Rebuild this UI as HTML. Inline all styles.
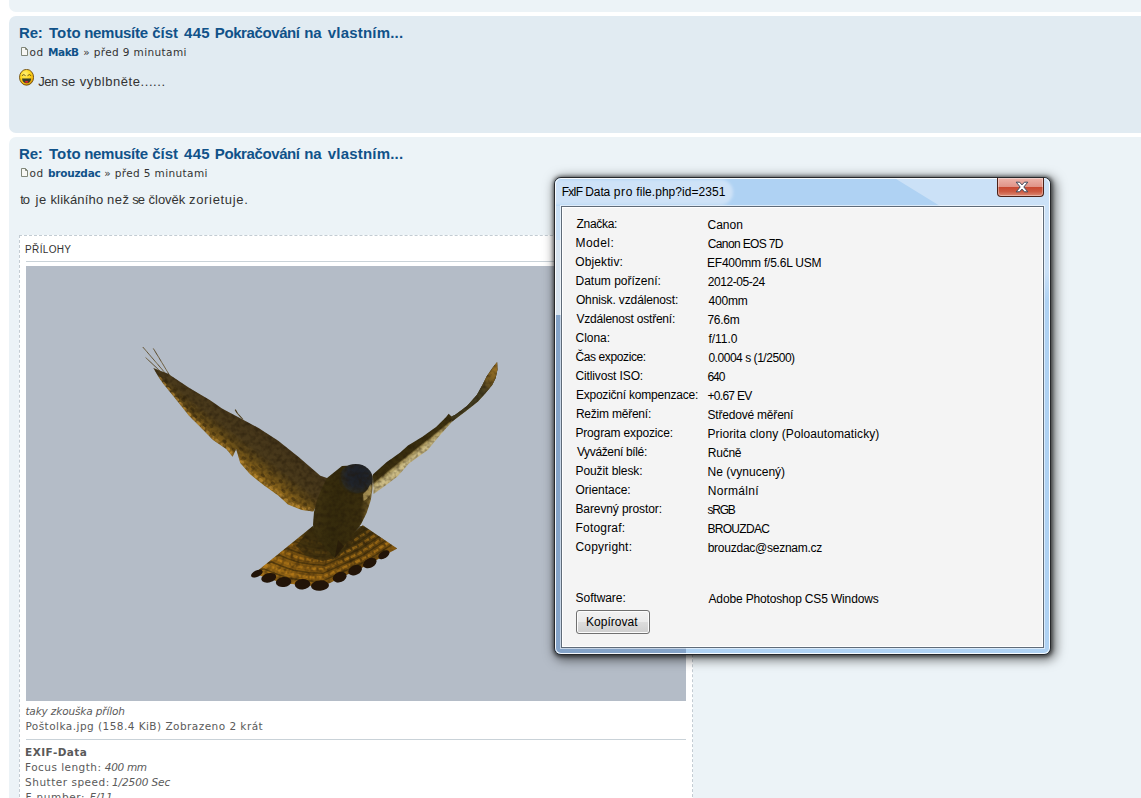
<!DOCTYPE html>
<html lang="cs"><head><meta charset="utf-8"><title>FxIF Data</title>
<style>
html,body{margin:0;padding:0;background:#fff;overflow:hidden}
body{width:1141px;height:798px;position:relative;font-family:"Liberation Sans","DejaVu Sans",sans-serif}
.a{position:absolute}
.post{position:absolute;left:9px;width:1160px;border-radius:7px}
.t{position:absolute;white-space:nowrap}
.t b{font-weight:bold}
.w{position:absolute;top:0;white-space:nowrap}
</style></head><body>
<!-- posts -->
<div class="post" style="top:-20px;height:32px;background:#ECF3F7"></div>
<div class="post" style="top:16px;height:117px;background:#E1EBF2"></div>
<div class="post" style="top:137px;height:700px;background:#ECF3F7"></div>
<!-- post icons -->
<svg class="a" style="left:21px;top:47px" width="7" height="9" viewBox="0 0 7 9"><path d="M.5.5H4.5L6.5 2.5V8.5H.5Z" fill="#f7f7f4" stroke="#81877a"/><path d="M4.5.5V2.5H6.5" fill="none" stroke="#81877a"/></svg>
<svg class="a" style="left:21px;top:168px" width="7" height="9" viewBox="0 0 7 9"><path d="M.5.5H4.5L6.5 2.5V8.5H.5Z" fill="#f7f7f4" stroke="#81877a"/><path d="M4.5.5V2.5H6.5" fill="none" stroke="#81877a"/></svg>
<!-- smiley -->
<svg class="a" style="left:19px;top:69px" width="15" height="17" viewBox="0 0 15 17">
<defs><radialGradient id="sg" cx="40%" cy="30%" r="70%"><stop offset="0" stop-color="#fff27a"/><stop offset=".5" stop-color="#ffd91e"/><stop offset=".85" stop-color="#f2b40e"/><stop offset="1" stop-color="#c98a08"/></radialGradient></defs>
<ellipse cx="7.55" cy="8.3" rx="7.05" ry="7.9" fill="url(#sg)" stroke="#6e4c0c" stroke-width=".9"/>
<path d="M3 9.5H12.2C12 12.6 10 14.2 7.6 14.2C5.2 14.2 3.2 12.6 3 9.5Z" fill="#38402f"/>
<ellipse cx="7.6" cy="12.9" rx="1.7" ry=".8" fill="#f0202c"/>
<path d="M2.9 6.7Q4.75 4.5 6.6 6.7M8.5 6.7Q10.35 4.5 12.2 6.7" fill="none" stroke="#4a3a0a" stroke-width=".8"/>
</svg>
<!-- attach box -->
<div class="a" style="left:19px;top:235px;width:672px;height:600px;background:#fff;border:1px dashed #C3CCD3"></div>
<div class="a" style="left:26px;top:261px;width:660px;height:1px;background:#C9D2D8"></div>
<div class="a" style="left:26px;top:739px;width:660px;height:1px;background:#C9D2D8"></div>
<!--IMAGE-->
<svg class="a" style="left:26px;top:266px" width="660" height="435" viewBox="26 266 660 435">
<defs>
<linearGradient id="sky" x1="0" y1="0" x2="0" y2="1"><stop offset="0" stop-color="#B4BCC9"/><stop offset="1" stop-color="#B2BAC5"/></linearGradient>
<linearGradient id="lw" gradientUnits="userSpaceOnUse" x1="268" y1="428" x2="232" y2="474"><stop offset="0" stop-color="#43341a"/><stop offset=".42" stop-color="#4a3a1b"/><stop offset=".56" stop-color="#624a18"/><stop offset=".72" stop-color="#8a641a"/><stop offset=".88" stop-color="#aa7c1e"/><stop offset="1" stop-color="#c4943c"/></linearGradient>
<linearGradient id="rw" gradientUnits="userSpaceOnUse" x1="402" y1="449" x2="414" y2="464"><stop offset="0" stop-color="#33290c"/><stop offset=".42" stop-color="#3e3210"/><stop offset=".52" stop-color="#a8955a"/><stop offset=".7" stop-color="#cfc08a"/><stop offset="1" stop-color="#c2b07a"/></linearGradient>
<linearGradient id="rwt" gradientUnits="userSpaceOnUse" x1="452" y1="418" x2="497" y2="362"><stop offset="0" stop-color="#3e381e"/><stop offset=".55" stop-color="#433c20"/><stop offset=".8" stop-color="#826222"/><stop offset="1" stop-color="#a37728"/></linearGradient>
<radialGradient id="tl" gradientUnits="userSpaceOnUse" cx="336" cy="507" r="95"><stop offset="0" stop-color="#33270a"/><stop offset=".42" stop-color="#45340e"/><stop offset=".6" stop-color="#6e4b10"/><stop offset=".8" stop-color="#8c5e12"/><stop offset="1" stop-color="#a06e18"/></radialGradient>
<linearGradient id="bd" gradientUnits="userSpaceOnUse" x1="316" y1="500" x2="372" y2="506"><stop offset="0" stop-color="#3e3210"/><stop offset=".35" stop-color="#342a0c"/><stop offset=".8" stop-color="#3a2e0e"/><stop offset=".93" stop-color="#6a5626"/><stop offset="1" stop-color="#9a8650"/></linearGradient>
<radialGradient id="hd" gradientUnits="userSpaceOnUse" cx="358" cy="476" r="18"><stop offset="0" stop-color="#1c2028"/><stop offset=".6" stop-color="#20242b"/><stop offset=".9" stop-color="#2b2a22"/><stop offset="1" stop-color="#30280f"/></radialGradient>
<filter id="mot" x="-2%" y="-2%" width="104%" height="104%" color-interpolation-filters="sRGB"><feTurbulence type="fractalNoise" baseFrequency=".22" numOctaves="2" seed="7" result="n"/><feColorMatrix in="n" type="matrix" values="0 0 0 0 .13  0 0 0 0 .09  0 0 0 0 .03  1.1 0 0 0 -.42" result="d"/><feComposite in="d" in2="SourceAlpha" operator="in" result="dc"/><feColorMatrix in="n" type="matrix" values="0 0 0 0 .95  0 0 0 0 .75  0 0 0 0 .4  0 .3 0 0 -.25" result="l"/><feComposite in="l" in2="SourceAlpha" operator="in" result="lc"/><feMerge><feMergeNode in="SourceGraphic"/><feMergeNode in="dc"/><feMergeNode in="lc"/></feMerge></filter>
<clipPath id="clw"><path d="M153.3 368.0L168.0 373.7L189.0 387.7L210.1 400.3L222.0 408.4L241.7 419.0L258.5 428.0L278.2 440.7L299.2 457.5L320.3 475.7L327.0 478.0L330.0 485.0L318.0 503.0L313.3 511.5L302.0 510.1L288.0 504.5L278.2 495.4L264.2 485.6L250.1 474.3L240.3 463.1L236.1 449.0L232.6 456.8L226.3 449.0L213.0 440.0L200.3 427.0L189.0 415.7L180.7 405.2L172.3 394.7L163.1 383.5L158.0 376.0L153.3 368.0Z"/></clipPath>
<clipPath id="ctl"><path d="M312.3 526.6L250.6 576.4L256.9 574.6L268.8 578.8L283.6 583.0L302.5 585.2L320.0 586.6L330.0 583.0L339.7 578.1L355.1 571.1L369.8 564.1L383.9 555.7L397.2 548.4L362.8 525.2L338.0 545.0Z"/></clipPath>
</defs>
<rect x="26" y="266" width="660" height="435" fill="#B4BCC7"/>
<g filter="url(#mot)">
<path d="M142.8 347L166 374M153.3 348.4L170 376M145.6 357.5L160 371" stroke="#6e5d38" stroke-width="1" fill="none" opacity=".85"/>
<path d="M235.2 409.6L237.5 413.5L243 419.5" stroke="#5a4a26" stroke-width="1.1" fill="none"/>
<path d="M153.3 368.0L168.0 373.7L189.0 387.7L210.1 400.3L222.0 408.4L241.7 419.0L258.5 428.0L278.2 440.7L299.2 457.5L320.3 475.7L327.0 478.0L330.0 485.0L318.0 503.0L313.3 511.5L302.0 510.1L288.0 504.5L278.2 495.4L264.2 485.6L250.1 474.3L240.3 463.1L236.1 449.0L232.6 456.8L226.3 449.0L213.0 440.0L200.3 427.0L189.0 415.7L180.7 405.2L172.3 394.7L163.1 383.5L158.0 376.0L153.3 368.0Z" fill="url(#lw)"/>
<g clip-path="url(#clw)"><ellipse cx="160.9" cy="378.1" rx="2.4" ry="1.5" transform="rotate(40 160.9 378.1)" fill="#33260c" opacity="0.50"/><ellipse cx="160.4" cy="378.8" rx="2.6" ry="1.6" transform="rotate(40 160.4 378.8)" fill="#c8963c" opacity=".6"/><ellipse cx="166.7" cy="380.3" rx="2.2" ry="1.5" transform="rotate(40 166.7 380.3)" fill="#33260c" opacity="0.35"/><ellipse cx="165.8" cy="381.7" rx="2.4" ry="1.5" transform="rotate(40 165.8 381.7)" fill="#33260c" opacity="0.45"/><ellipse cx="164.2" cy="384.0" rx="2.6" ry="1.6" transform="rotate(40 164.2 384.0)" fill="#c8963c" opacity=".6"/><ellipse cx="169.2" cy="387.8" rx="2.4" ry="1.5" transform="rotate(40 169.2 387.8)" fill="#33260c" opacity="0.50"/><ellipse cx="168.4" cy="389.0" rx="2.6" ry="1.6" transform="rotate(40 168.4 389.0)" fill="#c8963c" opacity=".6"/><ellipse cx="175.8" cy="388.9" rx="2.2" ry="1.5" transform="rotate(40 175.8 388.9)" fill="#33260c" opacity="0.35"/><ellipse cx="174.6" cy="390.8" rx="2.4" ry="1.5" transform="rotate(40 174.6 390.8)" fill="#33260c" opacity="0.45"/><ellipse cx="172.6" cy="394.0" rx="2.6" ry="1.6" transform="rotate(40 172.6 394.0)" fill="#c8963c" opacity=".6"/><ellipse cx="177.7" cy="397.4" rx="2.4" ry="1.5" transform="rotate(40 177.7 397.4)" fill="#33260c" opacity="0.50"/><ellipse cx="176.8" cy="399.0" rx="2.6" ry="1.6" transform="rotate(40 176.8 399.0)" fill="#c8963c" opacity=".6"/><ellipse cx="184.9" cy="397.5" rx="2.2" ry="1.5" transform="rotate(40 184.9 397.5)" fill="#33260c" opacity="0.35"/><ellipse cx="183.4" cy="399.9" rx="2.4" ry="1.5" transform="rotate(40 183.4 399.9)" fill="#33260c" opacity="0.45"/><ellipse cx="180.9" cy="404.0" rx="2.6" ry="1.6" transform="rotate(40 180.9 404.0)" fill="#c8963c" opacity=".6"/><ellipse cx="186.2" cy="407.0" rx="2.4" ry="1.5" transform="rotate(40 186.2 407.0)" fill="#33260c" opacity="0.50"/><ellipse cx="185.0" cy="409.1" rx="2.6" ry="1.6" transform="rotate(40 185.0 409.1)" fill="#c8963c" opacity=".6"/><ellipse cx="194.0" cy="405.9" rx="2.2" ry="1.5" transform="rotate(40 194.0 405.9)" fill="#33260c" opacity="0.35"/><ellipse cx="192.2" cy="409.0" rx="2.4" ry="1.5" transform="rotate(40 192.2 409.0)" fill="#33260c" opacity="0.45"/><ellipse cx="189.1" cy="414.1" rx="2.6" ry="1.6" transform="rotate(40 189.1 414.1)" fill="#c8963c" opacity=".6"/><ellipse cx="195.2" cy="416.3" rx="2.4" ry="1.5" transform="rotate(40 195.2 416.3)" fill="#33260c" opacity="0.50"/><ellipse cx="193.7" cy="418.7" rx="2.6" ry="1.6" transform="rotate(40 193.7 418.7)" fill="#c8963c" opacity=".6"/><ellipse cx="203.8" cy="413.9" rx="2.2" ry="1.5" transform="rotate(40 203.8 413.9)" fill="#33260c" opacity="0.35"/><ellipse cx="201.8" cy="417.4" rx="2.4" ry="1.5" transform="rotate(40 201.8 417.4)" fill="#33260c" opacity="0.45"/><ellipse cx="198.4" cy="423.3" rx="2.6" ry="1.6" transform="rotate(40 198.4 423.3)" fill="#c8963c" opacity=".6"/><ellipse cx="204.5" cy="425.1" rx="2.4" ry="1.5" transform="rotate(40 204.5 425.1)" fill="#33260c" opacity="0.50"/><ellipse cx="203.0" cy="427.8" rx="2.6" ry="1.6" transform="rotate(40 203.0 427.8)" fill="#c8963c" opacity=".6"/><ellipse cx="213.3" cy="422.1" rx="2.2" ry="1.5" transform="rotate(40 213.3 422.1)" fill="#33260c" opacity="0.35"/><ellipse cx="211.2" cy="426.0" rx="2.4" ry="1.5" transform="rotate(40 211.2 426.0)" fill="#33260c" opacity="0.45"/><ellipse cx="207.6" cy="432.5" rx="2.6" ry="1.6" transform="rotate(40 207.6 432.5)" fill="#c8963c" opacity=".6"/><ellipse cx="213.9" cy="434.0" rx="2.4" ry="1.5" transform="rotate(40 213.9 434.0)" fill="#33260c" opacity="0.50"/><ellipse cx="212.2" cy="437.1" rx="2.6" ry="1.6" transform="rotate(40 212.2 437.1)" fill="#c8963c" opacity=".6"/><ellipse cx="223.5" cy="429.5" rx="2.2" ry="1.5" transform="rotate(40 223.5 429.5)" fill="#33260c" opacity="0.35"/><ellipse cx="221.2" cy="433.8" rx="2.4" ry="1.5" transform="rotate(40 221.2 433.8)" fill="#33260c" opacity="0.45"/><ellipse cx="217.4" cy="441.0" rx="2.6" ry="1.6" transform="rotate(40 217.4 441.0)" fill="#c8963c" opacity=".6"/><ellipse cx="224.5" cy="441.4" rx="2.4" ry="1.5" transform="rotate(40 224.5 441.4)" fill="#33260c" opacity="0.50"/><ellipse cx="222.8" cy="444.6" rx="2.6" ry="1.6" transform="rotate(40 222.8 444.6)" fill="#c8963c" opacity=".6"/><ellipse cx="234.1" cy="436.3" rx="2.2" ry="1.5" transform="rotate(40 234.1 436.3)" fill="#33260c" opacity="0.35"/><ellipse cx="231.8" cy="440.9" rx="2.4" ry="1.5" transform="rotate(40 231.8 440.9)" fill="#33260c" opacity="0.45"/><ellipse cx="227.9" cy="448.6" rx="2.6" ry="1.6" transform="rotate(40 227.9 448.6)" fill="#c8963c" opacity=".6"/><ellipse cx="234.0" cy="449.9" rx="2.4" ry="1.5" transform="rotate(40 234.0 449.9)" fill="#33260c" opacity="0.50"/><ellipse cx="232.1" cy="453.5" rx="2.6" ry="1.6" transform="rotate(40 232.1 453.5)" fill="#c8963c" opacity=".6"/><ellipse cx="243.8" cy="444.1" rx="2.2" ry="1.5" transform="rotate(40 243.8 444.1)" fill="#33260c" opacity="0.35"/><ellipse cx="241.2" cy="449.3" rx="2.4" ry="1.5" transform="rotate(40 241.2 449.3)" fill="#33260c" opacity="0.45"/><ellipse cx="236.9" cy="457.9" rx="2.6" ry="1.6" transform="rotate(40 236.9 457.9)" fill="#c8963c" opacity=".6"/><ellipse cx="243.8" cy="458.2" rx="2.4" ry="1.5" transform="rotate(40 243.8 458.2)" fill="#33260c" opacity="0.50"/><ellipse cx="241.9" cy="462.1" rx="2.6" ry="1.6" transform="rotate(40 241.9 462.1)" fill="#c8963c" opacity=".6"/><ellipse cx="253.6" cy="452.0" rx="2.2" ry="1.5" transform="rotate(40 253.6 452.0)" fill="#33260c" opacity="0.35"/><ellipse cx="250.8" cy="457.6" rx="2.4" ry="1.5" transform="rotate(40 250.8 457.6)" fill="#33260c" opacity="0.45"/><ellipse cx="246.2" cy="467.0" rx="2.6" ry="1.6" transform="rotate(40 246.2 467.0)" fill="#c8963c" opacity=".6"/><ellipse cx="252.7" cy="467.5" rx="2.4" ry="1.5" transform="rotate(40 252.7 467.5)" fill="#33260c" opacity="0.50"/><ellipse cx="250.6" cy="471.8" rx="2.6" ry="1.6" transform="rotate(40 250.6 471.8)" fill="#c8963c" opacity=".6"/><ellipse cx="263.3" cy="460.0" rx="2.2" ry="1.5" transform="rotate(40 263.3 460.0)" fill="#33260c" opacity="0.35"/><ellipse cx="260.4" cy="465.9" rx="2.4" ry="1.5" transform="rotate(40 260.4 465.9)" fill="#33260c" opacity="0.45"/><ellipse cx="255.6" cy="475.9" rx="2.6" ry="1.6" transform="rotate(40 255.6 475.9)" fill="#c8963c" opacity=".6"/><ellipse cx="262.8" cy="475.5" rx="2.4" ry="1.5" transform="rotate(40 262.8 475.5)" fill="#33260c" opacity="0.50"/><ellipse cx="260.7" cy="480.0" rx="2.6" ry="1.6" transform="rotate(40 260.7 480.0)" fill="#c8963c" opacity=".6"/><ellipse cx="273.4" cy="467.7" rx="2.2" ry="1.5" transform="rotate(40 273.4 467.7)" fill="#33260c" opacity="0.35"/><ellipse cx="270.6" cy="473.8" rx="2.4" ry="1.5" transform="rotate(40 270.6 473.8)" fill="#33260c" opacity="0.45"/><ellipse cx="265.8" cy="484.0" rx="2.6" ry="1.6" transform="rotate(40 265.8 484.0)" fill="#c8963c" opacity=".6"/><ellipse cx="273.2" cy="483.3" rx="2.4" ry="1.5" transform="rotate(40 273.2 483.3)" fill="#33260c" opacity="0.50"/><ellipse cx="271.2" cy="487.8" rx="2.6" ry="1.6" transform="rotate(40 271.2 487.8)" fill="#c8963c" opacity=".6"/><ellipse cx="283.6" cy="475.2" rx="2.2" ry="1.5" transform="rotate(40 283.6 475.2)" fill="#33260c" opacity="0.35"/><ellipse cx="280.9" cy="481.3" rx="2.4" ry="1.5" transform="rotate(40 280.9 481.3)" fill="#33260c" opacity="0.45"/><ellipse cx="276.5" cy="491.5" rx="2.6" ry="1.6" transform="rotate(40 276.5 491.5)" fill="#c8963c" opacity=".6"/><ellipse cx="283.5" cy="491.1" rx="2.4" ry="1.5" transform="rotate(40 283.5 491.1)" fill="#33260c" opacity="0.50"/><ellipse cx="281.6" cy="495.6" rx="2.6" ry="1.6" transform="rotate(40 281.6 495.6)" fill="#c8963c" opacity=".6"/><ellipse cx="293.2" cy="483.4" rx="2.2" ry="1.5" transform="rotate(40 293.2 483.4)" fill="#33260c" opacity="0.35"/><ellipse cx="290.6" cy="489.7" rx="2.4" ry="1.5" transform="rotate(40 290.6 489.7)" fill="#33260c" opacity="0.45"/><ellipse cx="286.3" cy="500.1" rx="2.6" ry="1.6" transform="rotate(40 286.3 500.1)" fill="#c8963c" opacity=".6"/><ellipse cx="293.5" cy="499.1" rx="2.4" ry="1.5" transform="rotate(40 293.5 499.1)" fill="#33260c" opacity="0.50"/><ellipse cx="291.7" cy="503.6" rx="2.6" ry="1.6" transform="rotate(40 291.7 503.6)" fill="#c8963c" opacity=".6"/><ellipse cx="303.7" cy="490.2" rx="2.2" ry="1.5" transform="rotate(40 303.7 490.2)" fill="#33260c" opacity="0.35"/><ellipse cx="301.4" cy="496.2" rx="2.4" ry="1.5" transform="rotate(40 301.4 496.2)" fill="#33260c" opacity="0.45"/><ellipse cx="297.7" cy="506.1" rx="2.6" ry="1.6" transform="rotate(40 297.7 506.1)" fill="#c8963c" opacity=".6"/><ellipse cx="305.2" cy="504.2" rx="2.4" ry="1.5" transform="rotate(40 305.2 504.2)" fill="#33260c" opacity="0.50"/><ellipse cx="303.8" cy="508.3" rx="2.6" ry="1.6" transform="rotate(40 303.8 508.3)" fill="#c8963c" opacity=".6"/><ellipse cx="314.8" cy="495.3" rx="2.2" ry="1.5" transform="rotate(40 314.8 495.3)" fill="#33260c" opacity="0.35"/><ellipse cx="313.1" cy="500.5" rx="2.4" ry="1.5" transform="rotate(40 313.1 500.5)" fill="#33260c" opacity="0.45"/><ellipse cx="310.2" cy="509.3" rx="2.6" ry="1.6" transform="rotate(40 310.2 509.3)" fill="#c8963c" opacity=".6"/></g>
<path d="M497.1 361.9L492.2 368.2L486.6 376.6L482.4 385.1L476.8 394.9L467.0 406.1L455.7 414.5L451.5 416.6L448.7 413.8L445.9 417.3L436.1 427.1L422.1 437.0L408.0 445.4L400.3 452.6L386.2 462.4L372.9 474.4L373.6 494.0L386.2 484.9L397.4 476.5L408.7 463.8L420.0 455.4L427.7 450.0L436.1 439.8L445.9 428.5L452.2 421.5L455.7 418.7L467.0 410.3L478.2 401.2L485.2 393.5L492.2 385.1L495.7 378.0L497.5 369.6L497.1 361.9Z" fill="url(#rw)"/>
<path d="M497.1 361.9L492.2 368.2L486.6 376.6L482.4 385.1L476.8 394.9L467.0 406.1L455.7 414.5L451.5 416.6L452.2 421.5L455.7 418.7L467.0 410.3L478.2 401.2L485.2 393.5L492.2 385.1L495.7 378.0L497.5 369.6L497.1 361.9Z" fill="url(#rwt)"/>
<path d="M312.3 526.6L250.6 576.4L256.9 574.6L268.8 578.8L283.6 583.0L302.5 585.2L320.0 586.6L330.0 583.0L339.7 578.1L355.1 571.1L369.8 564.1L383.9 555.7L397.2 548.4L362.8 525.2L338.0 545.0Z" fill="url(#tl)"/>
<g clip-path="url(#ctl)" fill="none"><path d="M297.6 538.2L300.4 537.6L305.8 539.9L312.4 542.1L320.9 543.5L328.8 543.9L337.7 539.9L344.6 536.7L351.2 533.5L357.6 529.5L363.5 525.6" stroke="#cc8a1c" stroke-width="2.6" stroke-dasharray="5 2" opacity="0.25"/><path d="M288.2 545.9L291.7 545.1L298.4 547.9L306.7 550.7L317.2 552.4L327.0 552.9L338.1 547.9L346.7 544.0L354.9 540.0L362.8 535.0L370.3 530.2" stroke="#cc8a1c" stroke-width="2.6" stroke-dasharray="5 2" opacity="0.40"/><path d="M279.6 552.8L283.8 551.9L291.6 555.2L301.4 558.5L313.9 560.5L325.4 561.1L338.4 555.2L348.6 550.6L358.3 545.9L367.6 540.0L376.4 534.3" stroke="#cc8a1c" stroke-width="2.6" stroke-dasharray="5 2" opacity="0.50"/><path d="M271.1 559.7L275.9 558.7L284.9 562.5L296.2 566.3L310.5 568.6L323.8 569.3L338.8 562.5L350.5 557.2L361.7 551.8L372.4 545.0L382.5 538.5" stroke="#cc8a1c" stroke-width="2.6" stroke-dasharray="5 2" opacity="0.55"/><path d="M262.6 566.7L268.0 565.5L278.2 569.8L290.9 574.1L307.2 576.7L322.2 577.5L339.2 569.8L352.4 563.8L365.1 557.7L377.2 550.0L388.6 542.6" stroke="#cc8a1c" stroke-width="2.6" stroke-dasharray="5 2" opacity="0.55"/><path d="M292.4 542.4L295.7 541.7L301.7 544.2L309.3 546.8L318.9 548.3L327.8 548.8L337.9 544.2L345.7 540.7L353.2 537.1L360.4 532.5L367.2 528.1" stroke="#30240a" stroke-width="1.4" opacity=".55"/><path d="M283.9 549.3L287.7 548.5L295.0 551.5L304.0 554.6L315.6 556.4L326.2 557.0L338.3 551.5L347.7 547.3L356.6 543.0L365.2 537.5L373.3 532.3" stroke="#30240a" stroke-width="1.4" opacity=".55"/><path d="M275.4 556.3L279.8 555.3L288.3 558.8L298.8 562.4L312.2 564.5L324.6 565.2L338.6 558.8L349.6 553.9L360.0 548.9L370.0 542.5L379.5 536.4" stroke="#30240a" stroke-width="1.4" opacity=".55"/><path d="M266.8 563.2L271.9 562.1L281.6 566.1L293.6 570.2L308.9 572.6L323.0 573.4L339.0 566.1L351.5 560.5L363.4 554.8L374.8 547.5L385.6 540.5" stroke="#30240a" stroke-width="1.4" opacity=".55"/><path d="M258.3 570.2L264.0 568.9L274.8 573.4L288.3 578.0L305.5 580.7L321.4 581.6L339.4 573.4L353.4 567.1L366.8 560.7L379.6 552.5L391.7 544.7" stroke="#30240a" stroke-width="1.4" opacity=".55"/></g>
<g fill="#231408"><ellipse cx="256.9" cy="573.6" rx="6.2" ry="3.2" transform="rotate(-25 256.9 573.6)"/><ellipse cx="268.8" cy="577.8" rx="7.6" ry="4.6" transform="rotate(-14 268.8 577.8)"/><ellipse cx="283.6" cy="582.0" rx="7.8" ry="5.0" transform="rotate(-8 283.6 582.0)"/><ellipse cx="302.5" cy="584.2" rx="7.8" ry="5.2" transform="rotate(-3 302.5 584.2)"/><ellipse cx="320.0" cy="585.6" rx="9.0" ry="5.2" transform="rotate(-4 320.0 585.6)"/><ellipse cx="339.7" cy="577.1" rx="7.2" ry="5.0" transform="rotate(-22 339.7 577.1)"/><ellipse cx="355.1" cy="570.1" rx="7.2" ry="4.8" transform="rotate(-24 355.1 570.1)"/><ellipse cx="369.8" cy="563.1" rx="7.2" ry="4.6" transform="rotate(-27 369.8 563.1)"/><ellipse cx="383.9" cy="554.7" rx="6.2" ry="3.6" transform="rotate(-32 383.9 554.7)"/></g>
<path d="M312.5 526L296 546L306 556L322 561L336 558.5L349 547L363 526Z" fill="#382c0e" opacity=".7"/>
<path d="M327.0 478.0L322.0 488.0L317.0 500.0L314.0 512.0L313.0 525.0L316.0 536.0L324.0 547.0L334.8 558.0L340.0 551.0L350.0 538.0L361.0 524.2L366.6 512.9L370.8 500.3L372.6 488.0L372.9 476.0L362.0 465.0L342.0 466.0Z" fill="url(#bd)"/>
<path d="M338 540L334.8 558L344 546Z" fill="#2a1e0a"/>
<ellipse cx="355.8" cy="479" rx="17" ry="15" fill="url(#hd)"/>
<path d="M363 494Q368 490 370.5 484L371.5 492Q368 499 363.5 501Z" fill="#b8a060" opacity=".75"/>
</g>
</svg>
<!--/IMAGE-->
<!-- dialog -->
<div class="a" id="win" style="left:554px;top:177px;width:495px;height:476px;border:1px solid #26282b;border-radius:7px;background:#AFD2F3;box-shadow:.4px .4px 3.7px 1.1px rgba(0,0,0,.48),2.7px 2.7px 11px 2.2px rgba(0,0,0,.52);overflow:hidden">
  <svg class="a" style="left:0;top:0" width="495" height="476" viewBox="555 178 495 476">
    <defs>
      <filter id="gb" x="-5%" y="-20%" width="110%" height="140%"><feGaussianBlur stdDeviation="1.6"/></filter>
      <linearGradient id="rf" x1="0" y1="0" x2="0" y2="1"><stop offset="0" stop-color="#CBE1F7"/><stop offset=".7" stop-color="#CBE1F7"/><stop offset="1" stop-color="#AFD2F3"/></linearGradient>
    </defs>
    <!-- left glass: light over page, darker where the photo is behind -->
    <rect x="555" y="206" width="7" height="34" fill="#C8DFF5"/>
    <rect x="555" y="240" width="7" height="75" fill="#D7E3EE"/>
    <rect x="555" y="315" width="7" height="340" fill="#84A3C8"/>
    <rect x="555" y="647" width="131" height="8" fill="#84A3C8"/>
    <!-- right glass lighter near title -->
    <rect x="1043" y="206" width="8" height="95" fill="url(#rf)"/>
    <!-- title glow -->
    <rect x="530" y="179.5" width="203" height="25.5" rx="12.5" fill="#CEE2F7" filter="url(#gb)"/>
    <!-- aero reflection -->
    <path d="M894.5 178L1051 178L1051 206L940 206Z" fill="#CBE1F7"/>
  </svg>
  <div class="a" style="left:0;top:0;right:0;bottom:0;border-radius:6px;box-shadow:inset 0 0 0 1px rgba(255,255,255,.9)"></div>
</div>
<div class="a" id="content" style="left:561px;top:206px;width:481px;height:440px;border:1px solid #5f6b78;background:#F4F4F4;box-shadow:0 0 0 1px rgba(255,255,255,.55),inset 0 0 0 1px #fff"></div>
<!-- close button -->
<div class="a" id="close" style="left:997px;top:178px;width:45px;height:18px;border:1px solid #4b2118;border-top:0;border-radius:0 0 4px 4px;background:linear-gradient(#EDB5AB 0,#E09488 48%,#C8472F 50%,#CC5A42 75%,#DC8A74 100%);box-shadow:inset 0 0 0 1px rgba(255,255,255,.35)"></div>
<svg class="a" style="left:1013px;top:180px" width="18" height="14" viewBox="0 0 18 14"><path d="M3.2 2.2H6.6L9 4.9L11.4 2.2H14.8L10.8 7L14.8 11.8H11.4L9 9.1L6.6 11.8H3.2L7.2 7Z" fill="#fff" stroke="#3d4a5c" stroke-width="1" stroke-linejoin="round"/></svg>
<!-- button -->
<div class="a" id="button" style="left:576px;top:610px;width:72px;height:22px;border:1px solid #707070;border-radius:3px;background:linear-gradient(#F2F2F2 0,#EBEBEB 48%,#DDDDDD 50%,#CFCFCF 100%);box-shadow:inset 0 0 0 1px #fcfcfc"></div>
<!-- text -->
<div class="t" id="t1" style='left:0;top:23.0px;width:1141px;height:20px;font:bold 15px "Liberation Sans",sans-serif;line-height:20px;color:#105289;'><span class="w" style="left:19.1px;letter-spacing:-0.30px;">Re:</span> <span class="w" style="left:48.9px;letter-spacing:0.17px;">Toto</span> <span class="w" style="left:84.2px;letter-spacing:-0.29px;">nemusíte</span> <span class="w" style="left:152.2px;">číst</span> <span class="w" style="left:184.1px;letter-spacing:0.25px;">445</span> <span class="w" style="left:214.8px;letter-spacing:-0.40px;">Pokračování</span> <span class="w" style="left:304.2px;">na</span> <span class="w" style="left:327.8px;letter-spacing:0.20px;">vlastním...</span></div>
<div class="t" id="t2" style='left:0;top:144.0px;width:1141px;height:20px;font:bold 15px "Liberation Sans",sans-serif;line-height:20px;color:#105289;'><span class="w" style="left:19.1px;letter-spacing:-0.30px;">Re:</span> <span class="w" style="left:48.9px;letter-spacing:0.17px;">Toto</span> <span class="w" style="left:84.2px;letter-spacing:-0.29px;">nemusíte</span> <span class="w" style="left:152.2px;">číst</span> <span class="w" style="left:184.1px;letter-spacing:0.25px;">445</span> <span class="w" style="left:214.8px;letter-spacing:-0.40px;">Pokračování</span> <span class="w" style="left:304.2px;">na</span> <span class="w" style="left:327.8px;letter-spacing:0.20px;">vlastním...</span></div>
<div class="t" id="m1a" style='left:29.6px;top:42.0px;font:10.5px "DejaVu Sans","Liberation Sans",sans-serif;line-height:20px;color:#333;letter-spacing:0.60px;'>od</div>
<div class="t" id="m1b" style='left:48.1px;top:42.0px;font:bold 10.5px "DejaVu Sans","Liberation Sans",sans-serif;line-height:20px;color:#105289;letter-spacing:-0.50px;'>MakB</div>
<div class="t" id="m1c" style='left:83.2px;top:42.0px;font:10.5px "DejaVu Sans","Liberation Sans",sans-serif;line-height:20px;color:#333;letter-spacing:0.38px;'>» před 9 minutami</div>
<div class="t" id="m2a" style='left:29.6px;top:163.0px;font:10.5px "DejaVu Sans","Liberation Sans",sans-serif;line-height:20px;color:#333;letter-spacing:0.60px;'>od</div>
<div class="t" id="m2b" style='left:47.9px;top:163.0px;font:bold 10.5px "DejaVu Sans","Liberation Sans",sans-serif;line-height:20px;color:#105289;letter-spacing:-0.21px;'>brouzdac</div>
<div class="t" id="m2c" style='left:104.2px;top:163.0px;font:10.5px "DejaVu Sans","Liberation Sans",sans-serif;line-height:20px;color:#333;letter-spacing:0.38px;'>» před 5 minutami</div>
<div class="t" id="b1" style='left:0;top:72.0px;width:1141px;height:20px;font:13px "Liberation Sans",sans-serif;line-height:20px;color:#333;'><span class="w" style="left:38.2px;letter-spacing:-0.40px;">Jen</span> <span class="w" style="left:61.5px;">se</span> <span class="w" style="left:79.8px;letter-spacing:0.57px;">vyblbněte......</span></div>
<div class="t" id="b2" style='left:0;top:190.0px;width:1141px;height:20px;font:13px "Liberation Sans",sans-serif;line-height:20px;color:#333;'><span class="w" style="left:20.2px;letter-spacing:-1.00px;">to</span> <span class="w" style="left:35.4px;letter-spacing:0.80px;">je</span> <span class="w" style="left:50.4px;letter-spacing:0.19px;">klikáního</span> <span class="w" style="left:107.0px;letter-spacing:0.50px;">než</span> <span class="w" style="left:132.2px;letter-spacing:-1.00px;">se</span> <span class="w" style="left:148.5px;">člověk</span> <span class="w" style="left:189.0px;letter-spacing:0.67px;">zorietuje.</span></div>
<div class="t" id="att" style='left:25.1px;top:240.0px;font:10px "Liberation Sans",sans-serif;line-height:20px;color:#333;letter-spacing:0.33px;'>PŘÍLOHY</div>
<div class="t" id="c1" style='left:25.4px;top:701.0px;font:italic 10.5px "DejaVu Sans","Liberation Sans",sans-serif;line-height:20px;color:#5a5a5a;letter-spacing:-0.14px;'>taky zkouška příloh</div>
<div class="t" id="c2" style='left:25.4px;top:716.0px;font:10.5px "DejaVu Sans","Liberation Sans",sans-serif;line-height:20px;color:#5a5a5a;letter-spacing:0.46px;'>Poštolka.jpg (158.4 KiB) Zobrazeno 2 krát</div>
<div class="t" id="e0" style='left:25.1px;top:742.0px;font:bold 10.5px "DejaVu Sans","Liberation Sans",sans-serif;line-height:20px;color:#5a5a5a;letter-spacing:0.44px;'>EXIF-Data</div>
<div class="t" id="e1a" style='left:25.1px;top:757.0px;font:10.5px "DejaVu Sans","Liberation Sans",sans-serif;line-height:20px;color:#5a5a5a;letter-spacing:0.46px;'>Focus length:</div>
<div class="t" id="e1b" style='left:104.8px;top:757.0px;font:italic 10.5px "DejaVu Sans","Liberation Sans",sans-serif;line-height:20px;color:#5a5a5a;letter-spacing:-0.32px;'>400 mm</div>
<div class="t" id="e2a" style='left:25.1px;top:772.0px;font:10.5px "DejaVu Sans","Liberation Sans",sans-serif;line-height:20px;color:#5a5a5a;letter-spacing:0.50px;'>Shutter speed:</div>
<div class="t" id="e2b" style='left:112.0px;top:772.0px;font:italic 10.5px "DejaVu Sans","Liberation Sans",sans-serif;line-height:20px;color:#5a5a5a;letter-spacing:-0.11px;'>1/2500 Sec</div>
<div class="t" id="e3a" style='left:25.5px;top:787.0px;font:10.5px "DejaVu Sans","Liberation Sans",sans-serif;line-height:20px;color:#5a5a5a;letter-spacing:0.62px;'>F-number:</div>
<div class="t" id="e3b" style='left:89.8px;top:787.0px;font:italic 10.5px "DejaVu Sans","Liberation Sans",sans-serif;line-height:20px;color:#5a5a5a;'>F/11</div>
<div class="t" id="dt" style='left:0;top:182.0px;width:1141px;height:20px;font:12px "Liberation Sans",sans-serif;line-height:20px;color:#000;'><span class="w" style="left:561.8px;letter-spacing:-0.93px;">FxIF</span> <span class="w" style="left:585.3px;letter-spacing:-0.13px;">Data</span> <span class="w" style="left:613.8px;letter-spacing:0.60px;">pro</span> <span class="w" style="left:636.3px;letter-spacing:0.04px;">file.php?id=2351</span></div>
<div class="t" id="l0" style='left:576.5px;top:214.0px;font:12px "Liberation Sans",sans-serif;line-height:20px;color:#000;letter-spacing:-0.30px;'>Značka:</div>
<div class="t" id="v0" style='left:707.5px;top:215.0px;font:12px "Liberation Sans",sans-serif;line-height:20px;color:#000;'>Canon</div>
<div class="t" id="l1" style='left:575.5px;top:233.0px;font:12px "Liberation Sans",sans-serif;line-height:20px;color:#000;letter-spacing:0.44px;'>Model:</div>
<div class="t" id="v1" style='left:707.8px;top:234.0px;font:12px "Liberation Sans",sans-serif;line-height:20px;color:#000;letter-spacing:-0.64px;'>Canon EOS 7D</div>
<div class="t" id="l2" style='left:575.2px;top:252.0px;font:12px "Liberation Sans",sans-serif;line-height:20px;color:#000;letter-spacing:0.12px;'>Objektiv:</div>
<div class="t" id="v2" style='left:707.0px;top:253.0px;font:12px "Liberation Sans",sans-serif;line-height:20px;color:#000;letter-spacing:-0.22px;'>EF400mm f/5.6L USM</div>
<div class="t" id="l3" style='left:575.5px;top:271.0px;font:12px "Liberation Sans",sans-serif;line-height:20px;color:#000;'>Datum pořízení:</div>
<div class="t" id="v3" style='left:707.8px;top:272.0px;font:12px "Liberation Sans",sans-serif;line-height:20px;color:#000;letter-spacing:-0.44px;'>2012-05-24</div>
<div class="t" id="l4" style='left:575.9px;top:290.0px;font:12px "Liberation Sans",sans-serif;line-height:20px;color:#000;letter-spacing:-0.13px;'>Ohnisk. vzdálenost:</div>
<div class="t" id="v4" style='left:708.4px;top:291.0px;font:12px "Liberation Sans",sans-serif;line-height:20px;color:#000;letter-spacing:-0.15px;'>400mm</div>
<div class="t" id="l5" style='left:576.5px;top:309.0px;font:12px "Liberation Sans",sans-serif;line-height:20px;color:#000;letter-spacing:-0.22px;'>Vzdálenost ostření:</div>
<div class="t" id="v5" style='left:707.5px;top:310.0px;font:12px "Liberation Sans",sans-serif;line-height:20px;color:#000;letter-spacing:-0.30px;'>76.6m</div>
<div class="t" id="l6" style='left:575.5px;top:328.0px;font:12px "Liberation Sans",sans-serif;line-height:20px;color:#000;letter-spacing:-0.04px;'>Clona:</div>
<div class="t" id="v6" style='left:708.5px;top:329.0px;font:12px "Liberation Sans",sans-serif;line-height:20px;color:#000;letter-spacing:-0.04px;'>f/11.0</div>
<div class="t" id="l7" style='left:575.4px;top:347.0px;font:12px "Liberation Sans",sans-serif;line-height:20px;color:#000;letter-spacing:-0.38px;'>Čas expozice:</div>
<div class="t" id="v7" style='left:708.4px;top:348.0px;font:12px "Liberation Sans",sans-serif;line-height:20px;color:#000;letter-spacing:-0.46px;'>0.0004 s (1/2500)</div>
<div class="t" id="l8" style='left:575.4px;top:366.0px;font:12px "Liberation Sans",sans-serif;line-height:20px;color:#000;letter-spacing:-0.12px;'>Citlivost ISO:</div>
<div class="t" id="v8" style='left:707.5px;top:367.0px;font:12px "Liberation Sans",sans-serif;line-height:20px;color:#000;letter-spacing:-1.10px;'>640</div>
<div class="t" id="l9" style='left:575.9px;top:385.0px;font:12px "Liberation Sans",sans-serif;line-height:20px;color:#000;letter-spacing:-0.22px;'>Expoziční kompenzace:</div>
<div class="t" id="v9" style='left:707.5px;top:386.0px;font:12px "Liberation Sans",sans-serif;line-height:20px;color:#000;letter-spacing:-0.71px;'>+0.67 EV</div>
<div class="t" id="l10" style='left:575.9px;top:404.0px;font:12px "Liberation Sans",sans-serif;line-height:20px;color:#000;letter-spacing:-0.22px;'>Režim měření:</div>
<div class="t" id="v10" style='left:707.5px;top:405.0px;font:12px "Liberation Sans",sans-serif;line-height:20px;color:#000;letter-spacing:-0.20px;'>Středové měření</div>
<div class="t" id="l11" style='left:575.4px;top:423.0px;font:12px "Liberation Sans",sans-serif;line-height:20px;color:#000;letter-spacing:-0.15px;'>Program expozice:</div>
<div class="t" id="v11" style='left:707.5px;top:424.0px;font:12px "Liberation Sans",sans-serif;line-height:20px;color:#000;letter-spacing:0.10px;'>Priorita clony (Poloautomaticky)</div>
<div class="t" id="l12" style='left:576.9px;top:442.0px;font:12px "Liberation Sans",sans-serif;line-height:20px;color:#000;letter-spacing:-0.35px;'>Vyvážení bílé:</div>
<div class="t" id="v12" style='left:707.8px;top:443.0px;font:12px "Liberation Sans",sans-serif;line-height:20px;color:#000;letter-spacing:-0.25px;'>Ručně</div>
<div class="t" id="l13" style='left:575.5px;top:461.0px;font:12px "Liberation Sans",sans-serif;line-height:20px;color:#000;letter-spacing:-0.08px;'>Použit blesk:</div>
<div class="t" id="v13" style='left:707.5px;top:462.0px;font:12px "Liberation Sans",sans-serif;line-height:20px;color:#000;letter-spacing:0.02px;'>Ne (vynucený)</div>
<div class="t" id="l14" style='left:575.5px;top:480.0px;font:12px "Liberation Sans",sans-serif;line-height:20px;color:#000;letter-spacing:-0.02px;'>Orientace:</div>
<div class="t" id="v14" style='left:707.8px;top:481.0px;font:12px "Liberation Sans",sans-serif;line-height:20px;color:#000;letter-spacing:0.29px;'>Normální</div>
<div class="t" id="l15" style='left:575.4px;top:499.0px;font:12px "Liberation Sans",sans-serif;line-height:20px;color:#000;letter-spacing:-0.09px;'>Barevný prostor:</div>
<div class="t" id="v15" style='left:707.6px;top:500.0px;font:12px "Liberation Sans",sans-serif;line-height:20px;color:#000;letter-spacing:-1.30px;'>sRGB</div>
<div class="t" id="l16" style='left:575.6px;top:518.0px;font:12px "Liberation Sans",sans-serif;line-height:20px;color:#000;letter-spacing:0.18px;'>Fotograf:</div>
<div class="t" id="v16" style='left:707.5px;top:519.0px;font:12px "Liberation Sans",sans-serif;line-height:20px;color:#000;letter-spacing:-0.71px;'>BROUZDAC</div>
<div class="t" id="l17" style='left:575.5px;top:537.0px;font:12px "Liberation Sans",sans-serif;line-height:20px;color:#000;letter-spacing:0.20px;'>Copyright:</div>
<div class="t" id="v17" style='left:707.7px;top:538.0px;font:12px "Liberation Sans",sans-serif;line-height:20px;color:#000;letter-spacing:-0.25px;'>brouzdac@seznam.cz</div>
<div class="t" id="l18" style='left:575.6px;top:588.0px;font:12px "Liberation Sans",sans-serif;line-height:20px;color:#000;letter-spacing:-0.07px;'>Software:</div>
<div class="t" id="v18" style='left:708.5px;top:589.0px;font:12px "Liberation Sans",sans-serif;line-height:20px;color:#000;letter-spacing:-0.15px;'>Adobe Photoshop CS5 Windows</div>
<div class="t" id="btn" style='left:585.9px;top:612.0px;font:12px "Liberation Sans",sans-serif;line-height:20px;color:#000;letter-spacing:0.05px;'>Kopírovat</div>
</body></html>
